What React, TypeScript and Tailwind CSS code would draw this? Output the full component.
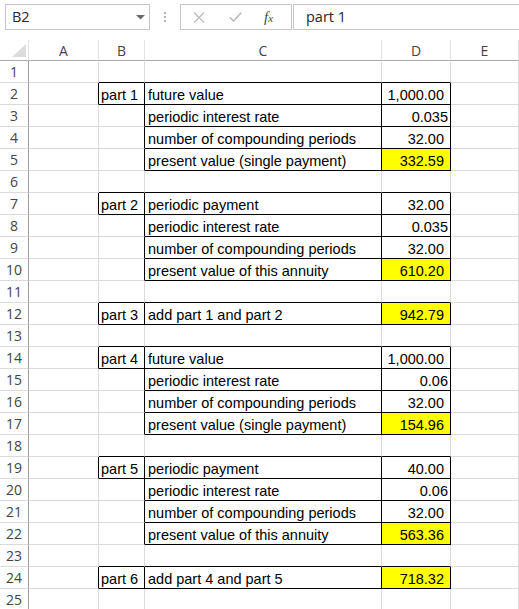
import React from "react";

type Row = {
  b?: string;
  c?: string;
  d?: string;
  general?: boolean;
  hi?: boolean;
  boxB?: boolean;
  boxCD?: boolean;
};

const rows: Row[] = [
  {},
  { b: "part 1", c: "future value", d: "1,000.00", boxB: true, boxCD: true },
  { c: "periodic interest rate", d: "0.035", general: true, boxCD: true },
  { c: "number of compounding periods", d: "32.00", boxCD: true },
  { c: "present value (single payment)", d: "332.59", hi: true, boxCD: true },
  {},
  { b: "part 2", c: "periodic payment", d: "32.00", boxB: true, boxCD: true },
  { c: "periodic interest rate", d: "0.035", general: true, boxCD: true },
  { c: "number of compounding periods", d: "32.00", boxCD: true },
  { c: "present value of this annuity", d: "610.20", hi: true, boxCD: true },
  {},
  { b: "part 3", c: "add part 1 and part 2", d: "942.79", hi: true, boxB: true, boxCD: true },
  {},
  { b: "part 4", c: "future value", d: "1,000.00", boxB: true, boxCD: true },
  { c: "periodic interest rate", d: "0.06", general: true, boxCD: true },
  { c: "number of compounding periods", d: "32.00", boxCD: true },
  { c: "present value (single payment)", d: "154.96", hi: true, boxCD: true },
  {},
  { b: "part 5", c: "periodic payment", d: "40.00", boxB: true, boxCD: true },
  { c: "periodic interest rate", d: "0.06", general: true, boxCD: true },
  { c: "number of compounding periods", d: "32.00", boxCD: true },
  { c: "present value of this annuity", d: "563.36", hi: true, boxCD: true },
  {},
  { b: "part 6", c: "add part 4 and part 5", d: "718.32", hi: true, boxB: true, boxCD: true },
  {},
];

// column index: 0 = A, 1 = B, 2 = C, 3 = D, 4 = E
function boxed(r: number, c: number): boolean {
  const row = rows[r];
  if (!row) return false;
  if (c === 1) return !!row.boxB;
  if (c === 2 || c === 3) return !!row.boxCD;
  return false;
}

function Cell({ r, c }: { r: number; c: number }) {
  const row = rows[r];
  const right = boxed(r, c) || boxed(r, c + 1);
  const bottom = boxed(r, c) || boxed(r + 1, c);
  const cls = [
    "h-[22px] border-r border-b overflow-hidden whitespace-nowrap pt-[4px] leading-[17px] text-[14.5px] text-black",
    right ? "border-r-black" : "border-r-[#dadada]",
    bottom ? "border-b-black" : "border-b-[#dadada]",
  ];
  let text: string | undefined;
  if (c === 1) {
    text = row.b;
    cls.push("pl-[2px]");
  } else if (c === 2) {
    text = row.c;
    cls.push("pl-[3px]");
  } else if (c === 3) {
    text = row.d;
    cls.push("text-right");
    cls.push(row.general ? "pr-[2px]" : "pr-[6px]");
    if (row.hi) cls.push("bg-[#ffff00]");
  }
  return <div className={cls.join(" ")}>{text}</div>;
}

function NameBox() {
  return (
    <div className="w-[145px] h-[26px] border border-[#c6c6c6] flex items-center justify-between pl-[6px] pr-[4px]">
      <span className="text-[14.5px] text-[#262626]">B2</span>
      <svg width="9" height="5" viewBox="0 0 9 5">
        <path d="M0 0h9L4.5 4.5z" fill="#6a6a6a" />
      </svg>
    </div>
  );
}

function FormulaButtons() {
  return (
    <div className="w-[112px] h-[26px] border border-[#c6c6c6] flex items-center">
      <svg className="ml-[12px]" width="12" height="11" viewBox="0 0 12 11">
        <path d="M1 0.5L11 10.5M11 0.5L1 10.5" stroke="#bdbdbd" strokeWidth="1.3" />
      </svg>
      <svg className="ml-[24px]" width="13" height="10" viewBox="0 0 13 10">
        <path d="M0.8 5.2L4.6 9L12.2 0.6" stroke="#bdbdbd" strokeWidth="1.6" fill="none" />
      </svg>
      <span
        className="ml-[22px] text-[15px] text-[#4a4a4a] italic leading-none"
        style={{ fontFamily: '"Liberation Serif", serif' }}
      >
        f<span className="text-[11px]">x</span>
      </span>
    </div>
  );
}

export default function App() {
  const cols = ["A", "B", "C", "D", "E"];
  return (
    <div
      className="w-[519px] h-[609px] bg-white overflow-hidden"
      style={{ fontFamily: '"Liberation Sans", Arial, sans-serif' }}
    >
      {/* name box and formula bar */}
      <div
        className="h-[40px] flex items-start pt-[4px] pl-[5px]"
        style={{ fontFamily: '"Open Sans", "Noto Sans", sans-serif' }}
      >
        <NameBox />
        <div className="w-[30px] h-[26px] flex flex-col items-center justify-center gap-[2px]">
          <div className="w-[2px] h-[2px] bg-[#b4b4b4]" />
          <div className="w-[2px] h-[2px] bg-[#b4b4b4]" />
          <div className="w-[2px] h-[2px] bg-[#b4b4b4]" />
        </div>
        <FormulaButtons />
        <div className="ml-[1px] flex-1 h-[26px] border border-r-0 border-[#c6c6c6] flex items-center pl-[12px]">
          <span className="text-[14.5px] text-[#262626]">part 1</span>
        </div>
      </div>

      {/* sheet grid */}
      <div className="grid grid-cols-[29px_70px_46px_237px_69px_1fr]">
        {/* column headers */}
        <div className="h-[21px] border-r border-b border-r-[#e1e1e1] border-b-[#ababab] relative">
          <svg className="absolute left-[12px] top-[4px]" width="14" height="13" viewBox="0 0 14 13">
            <path d="M14 0V13H0z" fill="#dcdcdc" />
          </svg>
        </div>
        {cols.map((c) => (
          <div
            key={c}
            className="h-[21px] border-r border-b border-r-[#e1e1e1] border-b-[#ababab] flex items-center justify-center text-[14px] text-[#444]"
            style={{ fontFamily: '"Open Sans", "Noto Sans", sans-serif' }}
          >
            {c}
          </div>
        ))}

        {rows.map((_, r) => (
          <React.Fragment key={r}>
            <div
              className="h-[22px] border-r border-b border-r-[#9b9b9b] border-b-[#dadada] flex items-center justify-center text-[14px] text-[#444]"
              style={{ fontFamily: '"Open Sans", "Noto Sans", sans-serif' }}
            >
              {r + 1}
            </div>
            {[0, 1, 2, 3, 4].map((c) => (
              <Cell key={c} r={r} c={c} />
            ))}
          </React.Fragment>
        ))}
      </div>
    </div>
  );
}
